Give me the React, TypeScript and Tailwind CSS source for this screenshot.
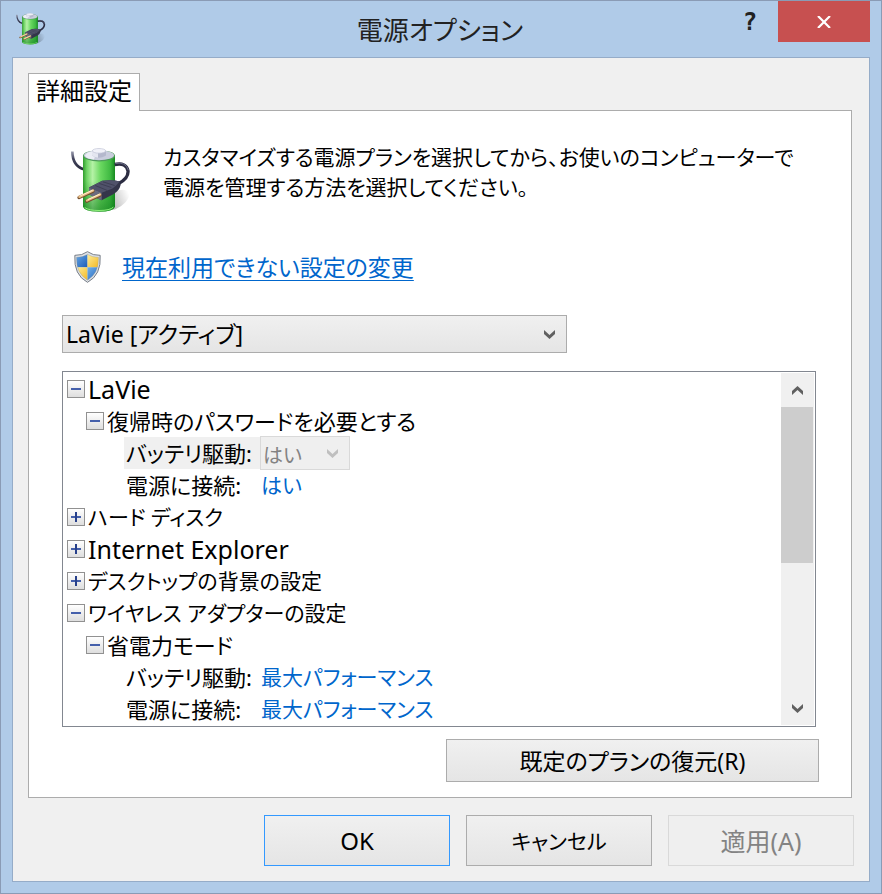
import { useId, useState } from "react";
import clsx from "clsx";

type Setting = {
  label: string;
  value: string;
  selected?: boolean;
};

type Row =
  | { kind: "node"; label: string; level: 1 | 2; open: boolean; latin?: boolean }
  | ({ kind: "setting" } & Setting);

const rows: Row[] = [
  { kind: "node", label: "LaVie", level: 1, open: true, latin: true },
  { kind: "node", label: "復帰時のパスワードを必要とする", level: 2, open: true },
  { kind: "setting", label: "バッテリ駆動:", value: "はい", selected: true },
  { kind: "setting", label: "電源に接続:", value: "はい" },
  { kind: "node", label: "ハード ディスク", level: 1, open: false },
  { kind: "node", label: "Internet Explorer", level: 1, open: false, latin: true },
  { kind: "node", label: "デスクトップの背景の設定", level: 1, open: false },
  { kind: "node", label: "ワイヤレス アダプターの設定", level: 1, open: true },
  { kind: "node", label: "省電力モード", level: 2, open: true },
  { kind: "setting", label: "バッテリ駆動:", value: "最大パフォーマンス" },
  { kind: "setting", label: "電源に接続:", value: "最大パフォーマンス" },
];

function BatteryIcon({ className }: { className?: string }) {
  const id = useId();
  return (
    <svg viewBox="60 48 180 200" className={className} aria-hidden="true">
      <defs>
        <linearGradient id={`${id}-body`} x1="0" x2="1" y1="0" y2="0">
          <stop offset="0" stopColor="#2f9c2c" />
          <stop offset="0.12" stopColor="#6fd465" />
          <stop offset="0.3" stopColor="#b5f2a6" />
          <stop offset="0.55" stopColor="#6ad860" />
          <stop offset="0.85" stopColor="#3fb942" />
          <stop offset="1" stopColor="#178a20" />
        </linearGradient>
        <linearGradient id={`${id}-low`} x1="0" x2="0" y1="0" y2="1">
          <stop offset="0.45" stopColor="#0d7a1a" stopOpacity="0" />
          <stop offset="1" stopColor="#0d7a1a" stopOpacity="0.6" />
        </linearGradient>
        <linearGradient id={`${id}-shadow`} x1="0" x2="1" y1="0.6" y2="0.3">
          <stop offset="0" stopColor="#000" stopOpacity="0.4" />
          <stop offset="1" stopColor="#000" stopOpacity="0" />
        </linearGradient>
        <linearGradient id={`${id}-cord`} x1="0" x2="0" y1="0" y2="1">
          <stop offset="0" stopColor="#9a9cae" />
          <stop offset="0.4" stopColor="#45475f" />
          <stop offset="1" stopColor="#2b2c40" />
        </linearGradient>
      </defs>
      <path d="M150 242 L195 238 Q236 220 240 188 Q225 172 196 184 Z" fill={`url(#${id}-shadow)`} />
      <path d="M67 64 Q68 108 101 117" fill="none" stroke={`url(#${id}-cord)`} strokeWidth="8" />
      <path d="M99 76 V230 Q104 245 147 245 Q190 245 195 230 V76 Z" fill={`url(#${id}-body)`} />
      <path d="M99 76 V230 Q104 245 147 245 Q190 245 195 230 V76 Z" fill={`url(#${id}-low)`} />
      <path d="M104 232 Q116 241 147 241 Q180 241 190 231" fill="none" stroke="#8df07a" strokeWidth="3" />
      <ellipse cx="147" cy="77" rx="48" ry="17" fill="#4e9b5a" />
      <ellipse cx="147" cy="75" rx="45" ry="15" fill="#c9cddd" />
      <path d="M105 76 Q112 63 140 62 L132 88 Q109 87 105 76" fill="#eceef6" />
      <path d="M126 62 V76 Q147 90 168 76 V62 Z" fill="#b4b8cc" />
      <path d="M126 62 V76 Q134 82 144 83 V62 Z" fill="#e4e6f0" />
      <ellipse cx="147" cy="62" rx="20" ry="7" fill="#f1f2f9" stroke="#c0c3d4" strokeWidth="2" />
      <path
        d="M194 103 Q229 96 234 122 Q236 144 206 160"
        fill="none"
        stroke="#2c2d42"
        strokeWidth="10"
      />
      <path d="M196 100 Q228 94 235 120" fill="none" stroke="#686b85" strokeWidth="3" />
      <path d="M117 172 L157 152 Q185 147 209 154 L212 164 Q208 183 190 192 L155 210 L117 193 Z" fill="#34354a" />
      <path d="M117 172 L157 152 Q185 147 209 154 Q196 170 186 176 L155 188 Z" fill="#50526a" />
      <path d="M136 166 L172 181 M148 160 L184 172 M159 155 L194 166" stroke="#343548" strokeWidth="2" />
      <path d="M117 172 L155 188 V210 L117 193 Z" fill="#696b80" />
      <path d="M129 183 L87 202" stroke="#76502e" strokeWidth="10" strokeLinecap="round" />
      <path d="M129 181 L88 200" stroke="#e9be87" strokeWidth="7" strokeLinecap="round" />
      <path d="M128 180 L91 197" stroke="#fff0cf" strokeWidth="3" />
      <path d="M150 195 L110 213" stroke="#76502e" strokeWidth="10" strokeLinecap="round" />
      <path d="M150 193 L111 211" stroke="#e9be87" strokeWidth="7" strokeLinecap="round" />
      <path d="M149 192 L114 208" stroke="#fff0cf" strokeWidth="3" />
    </svg>
  );
}

function ShieldIcon({ className }: { className?: string }) {
  const id = useId();
  const inner = "M114 374 Q128 383 147 383 Q149 430 114 452 Q79 430 81 383 Q100 383 114 374 Z";
  return (
    <svg viewBox="74 364 80 96" className={className} aria-hidden="true">
      <defs>
        <clipPath id={`${id}-clip`}>
          <path d={inner} />
        </clipPath>
        <linearGradient id={`${id}-blue`} x1="0" x2="1" y1="0" y2="1">
          <stop offset="0" stopColor="#6fb0ea" />
          <stop offset="1" stopColor="#1c5cb8" />
        </linearGradient>
        <linearGradient id={`${id}-gold`} x1="0" x2="1" y1="0" y2="1">
          <stop offset="0" stopColor="#fff0a0" />
          <stop offset="1" stopColor="#f2b51c" />
        </linearGradient>
      </defs>
      <path
        d="M114 366 Q130 378 152 377 Q156 436 114 458 Q72 436 76 377 Q98 378 114 366 Z"
        fill="#dfe3e8"
        stroke="#777d86"
        strokeWidth="3"
      />
      <g clipPath={`url(#${id}-clip)`}>
        <rect x="76" y="370" width="38" height="43" fill={`url(#${id}-blue)`} />
        <rect x="114" y="370" width="38" height="43" fill={`url(#${id}-gold)`} />
        <rect x="76" y="413" width="38" height="43" fill={`url(#${id}-gold)`} />
        <rect x="114" y="413" width="38" height="43" fill={`url(#${id}-blue)`} />
      </g>
      <path d={inner} fill="none" stroke="#8b8f85" strokeWidth="1" />
    </svg>
  );
}

function Chevron({ up, className }: { up?: boolean; className?: string }) {
  return (
    <svg viewBox="0 0 11 9" className={clsx("h-[9px] w-[11px]", className)} aria-hidden="true">
      <path
        d={up ? "M0 9 V5 L5.5 0 L11 5 V9 L5.5 4 Z" : "M0 0 V4 L5.5 9 L11 4 V0 L5.5 5 Z"}
        fill="currentColor"
      />
    </svg>
  );
}

function TreeToggle({ open, label }: { open: boolean; label: string }) {
  return (
    <button
      type="button"
      aria-label={label}
      aria-expanded={open}
      className="flex size-[18px] shrink-0 items-center justify-center border border-[#919191] bg-linear-to-b from-white to-[#dedede]"
    >
      <svg viewBox="0 0 10 10" className="size-[10px]" aria-hidden="true">
        <path d="M0 4h10v2H0z" fill="#4560ab" />
        {!open && <path d="M4 0h2v10H4z" fill="#27408b" />}
      </svg>
    </button>
  );
}

function TreeRow({ row }: { row: Row }) {
  if (row.kind === "node") {
    return (
      <li
        className={clsx(
          "flex h-8 items-center gap-[3px]",
          row.level === 1 ? "pl-1 text-[21px]" : "pl-[23px] text-[22px]"
        )}
      >
        <TreeToggle open={row.open} label={row.label} />
        <span className={clsx("whitespace-nowrap", row.latin && "text-[25px]")}>{row.label}</span>
      </li>
    );
  }

  return (
    <li className="flex h-8 items-center pl-[61px] text-[22px]">
      <span
        className={clsx(
          "flex h-8 w-[136px] shrink-0 items-center pl-[2px] whitespace-nowrap",
          row.selected && "bg-[#f0f0f0]"
        )}
      >
        {row.label}
      </span>
      {row.selected ? (
        <span className="relative">
          <select
            disabled
            aria-label={row.label}
            className="block h-[34px] w-[90px] appearance-none border border-[#d9d9d9] bg-[#efefef] pt-[3px] pl-[2px] text-[20px] text-[#838383] opacity-100"
          >
            <option>{row.value}</option>
          </select>
          <Chevron className="pointer-events-none absolute top-[13px] right-3 text-[#bfbfbf]" />
        </span>
      ) : (
        <a href="#" className="pl-px text-[21px] whitespace-nowrap text-[#0066cc]">
          {row.value}
        </a>
      )}
    </li>
  );
}

function DialogButton({ children, className, disabled }: {
  children: React.ReactNode;
  className?: string;
  disabled?: boolean;
}) {
  return (
    <button
      type="button"
      disabled={disabled}
      className={clsx(
        "border whitespace-nowrap",
        disabled
          ? "border-[#d9d9d9] bg-[#efefef] text-[#838383]"
          : "bg-linear-to-b from-[#f0f0f0] to-[#e5e5e5]",
        className
      )}
    >
      {children}
    </button>
  );
}

export default function App() {
  const [plan, setPlan] = useState("lavie");

  return (
    <div className="flex min-h-screen flex-col border border-[#8a9bb5] bg-[#b0cbe8] px-[11px] pb-[11px] font-['Noto_Sans','Noto_Sans_CJK_JP',sans-serif] text-[24px] leading-8 text-black [font-feature-settings:'palt']">
      {/* Title bar */}
      <header className="flex h-14 items-start">
        <div className="flex w-[120px] shrink-0 pt-[11px] pl-[3px]">
          <BatteryIcon className="h-[33px] w-[31px]" />
        </div>
        <h1 className="flex-1 pt-[13px] pl-[26px] text-center text-[26px] text-[#222]">電源オプション</h1>
        <button type="button" aria-label="ヘルプ" className="h-[42px] w-14 font-['DejaVu_Sans_Mono',monospace] text-[24px] font-bold text-[#222]">
          ?
        </button>
        <button
          type="button"
          aria-label="閉じる"
          className="flex h-[41px] w-[92px] items-center justify-center bg-[#c75050] text-white"
        >
          <svg viewBox="0 0 14 12" className="h-3 w-[14px]" aria-hidden="true">
            <path d="M1 0 L13 12 M13 0 L1 12" stroke="currentColor" strokeWidth="2.2" />
          </svg>
        </button>
      </header>

      <main className="flex flex-1 flex-col border border-[#95acc8] bg-[#f0f0f0] p-[15px]">
        <div role="tablist" className="relative z-10 -mb-px flex">
          <button
            type="button"
            role="tab"
            aria-selected="true"
            className="h-[38px] border border-b-0 border-[#acacac] bg-white px-[7px] pb-1"
          >
            詳細設定
          </button>
        </div>

        {/* Tab page */}
        <section className="mr-[2px] flex flex-1 flex-col border border-[#acacac] bg-white pr-8 pb-[15px] pl-[33px]">
          <div className="flex pt-[31px]">
            <BatteryIcon className="mt-1 mr-[33px] ml-2 h-[67px] w-[60px] shrink-0" />
            <p className="text-[21px] leading-[30px]">
              カスタマイズする電源プランを選択してから、お使いのコンピューターで
              <br />
              電源を管理する方法を選択してください。
            </p>
          </div>

          <div className="mt-[38px] flex h-8 items-center pl-3">
            <ShieldIcon className="mr-[21px] h-8 w-[27px]" />
            <a href="#" className="text-[23px] text-[#0066cc] underline decoration-1 underline-offset-4">
              現在利用できない設定の変更
            </a>
          </div>

          <div className="relative mt-8 w-2/3">
            <select
              aria-label="電源プラン"
              value={plan}
              onChange={(e) => setPlan(e.target.value)}
              className="block h-[38px] w-full appearance-none border border-[#acacac] bg-linear-to-b from-[#f0f0f0] to-[#e5e5e5] pl-[3px] text-[23px]"
            >
              <option value="lavie">LaVie [アクティブ]</option>
            </select>
            <Chevron className="pointer-events-none absolute top-[15px] right-3 text-[#606060]" />
          </div>

          {/* Settings tree */}
          <div className="mt-[18px] mr-[3px] flex h-[356px] border border-[#828790] py-px pr-px">
            <ul className="flex-1 overflow-hidden">
              {rows.map((row, i) => (
                <TreeRow key={i} row={row} />
              ))}
            </ul>
            <div className="flex w-[33px] flex-col bg-[#f0f0f0]">
              <button type="button" aria-label="上へ" className="flex h-[34px] items-center justify-center text-[#606060]">
                <Chevron up />
              </button>
              <div className="mr-px h-[156px] bg-[#cdcdcd]" />
              <button type="button" aria-label="下へ" className="mt-auto flex h-[34px] items-center justify-center text-[#606060]">
                <Chevron />
              </button>
            </div>
          </div>

          <div className="mt-3 flex justify-end">
            <DialogButton className="h-[43px] w-[373px] border-[#acacac] text-[23px]">既定のプランの復元(R)</DialogButton>
          </div>
        </section>

        <footer className="mt-[17px] flex justify-end gap-4">
          <DialogButton className="h-[51px] w-[186px] border-[#3399ff]">OK</DialogButton>
          <DialogButton className="h-[51px] w-[186px] border-[#acacac] text-[21px]">キャンセル</DialogButton>
          <DialogButton disabled className="h-[51px] w-[186px] text-[25px]">
            適用(A)
          </DialogButton>
        </footer>
      </main>
    </div>
  );
}
